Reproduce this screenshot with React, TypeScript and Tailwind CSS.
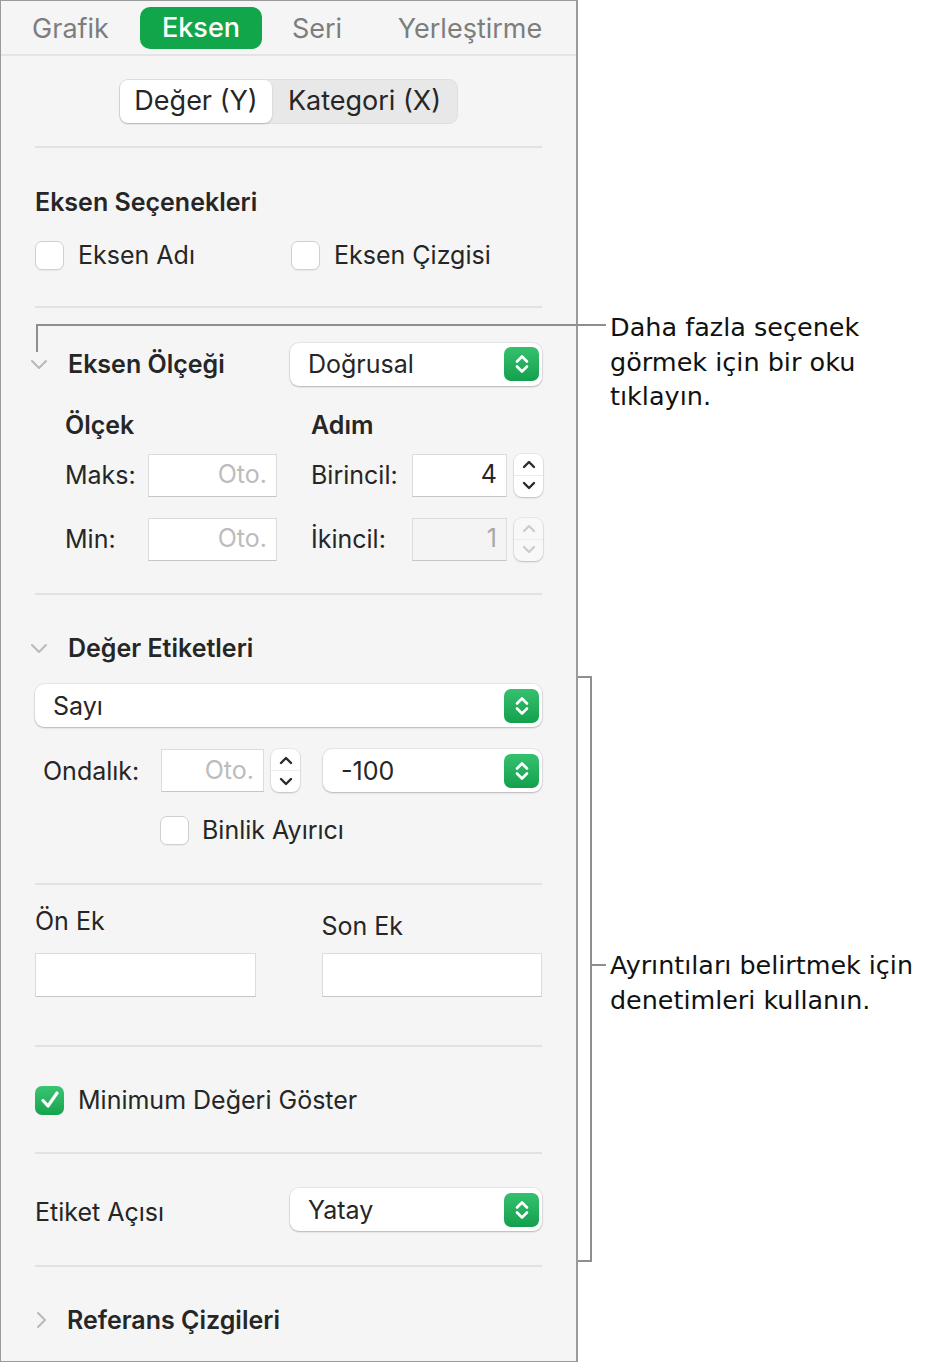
import React from 'react'

const TEXT = 'text-[25px] text-[#262626] leading-[32px]'

function Divider() {
  return <div className="mx-[34px] h-[2px] shrink-0 bg-[#e2e2e2]" />
}

function ChevronDown() {
  return (
    <svg width="18" height="12" viewBox="0 0 18 12" fill="none" stroke="#b9b9b9" strokeWidth="2" strokeLinecap="round" strokeLinejoin="round">
      <path d="M2 3l7 7 7-7" />
    </svg>
  )
}

function ChevronRight() {
  return (
    <svg width="12" height="18" viewBox="0 0 12 18" fill="none" stroke="#b9b9b9" strokeWidth="2" strokeLinecap="round" strokeLinejoin="round">
      <path d="M3 2l7 7-7 7" />
    </svg>
  )
}

function GreenUpDown() {
  return (
    <div className="w-[35px] h-[34px] shrink-0 rounded-[7px] bg-linear-to-b from-[#34c16e] to-[#12a04e] flex items-center justify-center">
      <svg width="16" height="24" viewBox="0 0 16 24" fill="none" stroke="white" strokeWidth="2.6" strokeLinecap="round" strokeLinejoin="round">
        <path d="M3 9.5l5-5 5 5" />
        <path d="M3 14.5l5 5 5-5" />
      </svg>
    </div>
  )
}

function Popup({ label, className = '' }: { label: string; className?: string }) {
  return (
    <div className={`h-[43px] shrink-0 bg-white rounded-[9px] shadow-[0_0_0_1px_rgba(0,0,0,0.05),0_1px_2px_rgba(0,0,0,0.22)] flex items-center pl-[18px] pr-[3px] ${className}`}>
      <span className={`flex-1 ${TEXT}`}>{label}</span>
      <GreenUpDown />
    </div>
  )
}

function Stepper({ disabled = false }: { disabled?: boolean }) {
  const stroke = disabled ? '#cdcdcd' : '#2a2a2a'
  return (
    <div className={`w-[29px] h-[43px] shrink-0 rounded-[8px] flex flex-col shadow-[0_0_0_1px_rgba(0,0,0,0.05),0_1px_2px_rgba(0,0,0,0.18)] ${disabled ? 'bg-[#f8f8f8]' : 'bg-white'}`}>
      <div className="flex-1 flex items-center justify-center border-b border-[#ececec]">
        <svg width="16" height="10" viewBox="0 0 16 10" fill="none" stroke={stroke} strokeWidth="2.4" strokeLinecap="round" strokeLinejoin="round">
          <path d="M3 8l5-5 5 5" />
        </svg>
      </div>
      <div className="flex-1 flex items-center justify-center">
        <svg width="16" height="10" viewBox="0 0 16 10" fill="none" stroke={stroke} strokeWidth="2.4" strokeLinecap="round" strokeLinejoin="round">
          <path d="M3 2l5 5 5-5" />
        </svg>
      </div>
    </div>
  )
}

function Field({ value = '', placeholder = false, disabled = false, className = '' }: { value?: string; placeholder?: boolean; disabled?: boolean; className?: string }) {
  return (
    <div
      className={`h-[43px] shrink-0 border border-[#dcdcdc] border-b-[#c6c6c6] flex items-center justify-end pr-[9px] text-[25px] ${
        disabled ? 'bg-[#f4f4f4] text-[#a8a8a8]' : 'bg-white'
      } ${placeholder ? 'text-[#bcbcbc]' : disabled ? '' : 'text-[#262626]'} ${className}`}
    >
      {value}
    </div>
  )
}

function Checkbox({ checked = false }: { checked?: boolean }) {
  if (checked) {
    return (
      <div className="w-[29px] h-[29px] shrink-0 rounded-[7px] bg-linear-to-b from-[#38c571] to-[#15a34f] flex items-center justify-center">
        <svg width="20" height="18" viewBox="0 0 20 18" fill="none" stroke="white" strokeWidth="3.2" strokeLinecap="round" strokeLinejoin="round">
          <path d="M3 9.5l5 5.5 9-13" />
        </svg>
      </div>
    )
  }
  return <div className="w-[29px] h-[29px] shrink-0 rounded-[7px] bg-white border border-[#d0d0d0] shadow-[0_1px_1px_rgba(0,0,0,0.05)]" />
}

export default function App() {
  return (
    <div className="relative w-[926px] h-[1362px] bg-white flex [font-family:Inter,'Liberation_Sans',sans-serif]">
      {/* Inspector panel */}
      <div className="w-[578px] h-[1362px] shrink-0 bg-[#f5f5f5] border border-[#9a9a9a] border-r-2 flex flex-col">
        {/* Tabs */}
        <div className="h-[55px] shrink-0 flex items-center border-b-2 border-[#e4e4e4]">
          <div className="w-[139px] pt-[3px] text-center text-[27px] text-[#7d7d7d]">Grafik</div>
          <div className="w-[122px] h-[42px] pt-[1px] rounded-[10px] bg-[#12a64b] flex items-center justify-center text-[27px] text-white font-medium">Eksen</div>
          <div className="w-[110px] pt-[3px] text-center text-[27px] text-[#7d7d7d]">Seri</div>
          <div className="w-[196px] pt-[3px] text-center text-[27px] text-[#7d7d7d]">Yerleştirme</div>
        </div>

        {/* Segmented control */}
        <div className="h-[90px] shrink-0 flex items-center justify-center">
          <div className="h-[45px] rounded-[9px] bg-[#e8e8e8] flex p-[1px] shadow-[inset_0_0_0_1px_rgba(0,0,0,0.04)]">
            <div className="w-[152px] rounded-[8px] bg-white shadow-[0_1px_2px_rgba(0,0,0,0.2)] flex items-center justify-center text-[27px] text-[#262626]">Değer (Y)</div>
            <div className="w-[185px] flex items-center justify-center text-[27px] text-[#262626]">Kategori (X)</div>
          </div>
        </div>

        <Divider />

        {/* Eksen Seçenekleri */}
        <div className="px-[34px] pt-[38px] pb-[35px] shrink-0">
          <div className={`h-[32px] font-semibold ${TEXT}`}>Eksen Seçenekleri</div>
          <div className="mt-[21px] h-[32px] flex items-center">
            <div className="w-[256px] shrink-0 flex items-center gap-[14px]">
              <Checkbox />
              <span className={TEXT}>Eksen Adı</span>
            </div>
            <div className="flex items-center gap-[14px]">
              <Checkbox />
              <span className={TEXT}>Eksen Çizgisi</span>
            </div>
          </div>
        </div>

        <Divider />

        {/* Eksen Ölçeği */}
        <div className="px-[34px] pt-[34px] pb-[32px] shrink-0">
          <div className="h-[44px] flex items-center">
            <div className="w-[32px] -ml-[12px] shrink-0 flex items-center justify-center">
              <ChevronDown />
            </div>
            <span className={`ml-[13px] font-semibold ${TEXT}`}>Eksen Ölçeği</span>
            <Popup label="Doğrusal" className="ml-auto w-[252px]" />
          </div>
          <div className="mt-[23px] h-[32px] flex items-center pl-[30px]">
            <span className={`w-[246px] shrink-0 font-semibold ${TEXT}`}>Ölçek</span>
            <span className={`font-semibold ${TEXT}`}>Adım</span>
          </div>
          <div className="mt-[12px] h-[44px] flex items-center pl-[30px]">
            <span className={`w-[83px] shrink-0 ${TEXT}`}>Maks:</span>
            <Field value="Oto." placeholder className="w-[129px]" />
            <span className={`ml-[34px] w-[101px] shrink-0 ${TEXT}`}>Birincil:</span>
            <Field value="4" className="w-[95px]" />
            <div className="ml-[7px] shrink-0">
              <Stepper />
            </div>
          </div>
          <div className="mt-[20px] h-[44px] flex items-center pl-[30px]">
            <span className={`w-[83px] shrink-0 ${TEXT}`}>Min:</span>
            <Field value="Oto." placeholder className="w-[129px]" />
            <span className={`ml-[34px] w-[101px] shrink-0 ${TEXT}`}>İkincil:</span>
            <Field value="1" disabled className="w-[95px]" />
            <div className="ml-[7px] shrink-0">
              <Stepper disabled />
            </div>
          </div>
        </div>

        <Divider />

        {/* Değer Etiketleri */}
        <div className="px-[34px] pt-[37px] pb-[37px] shrink-0">
          <div className="h-[32px] flex items-center">
            <div className="w-[32px] -ml-[12px] shrink-0 flex items-center justify-center">
              <ChevronDown />
            </div>
            <span className={`ml-[13px] font-semibold ${TEXT}`}>Değer Etiketleri</span>
          </div>
          <Popup label="Sayı" className="mt-[20px] h-[42px] w-full" />
          <div className="mt-[22px] h-[43px] flex items-center pl-[8px]">
            <span className={`w-[118px] shrink-0 ${TEXT}`}>Ondalık:</span>
            <Field value="Oto." placeholder className="w-[103px] h-[41px]" />
            <div className="ml-[7px] shrink-0">
              <Stepper />
            </div>
            <Popup label="-100" className="ml-[23px] flex-1 shrink" />
          </div>
          <div className="mt-[22px] h-[32px] flex items-center pl-[125px] gap-[13px]">
            <Checkbox />
            <span className={TEXT}>Binlik Ayırıcı</span>
          </div>
        </div>

        <Divider />

        {/* Ön Ek / Son Ek */}
        <div className="px-[34px] pt-[20px] pb-[48px] shrink-0 grid grid-cols-2 gap-x-[66px]">
          <div>
            <div className={`h-[32px] ${TEXT}`}>Ön Ek</div>
            <Field className="mt-[16px] h-[44px] w-full" />
          </div>
          <div>
            <div className={`h-[32px] pt-[5px] ${TEXT}`}>Son Ek</div>
            <Field className="mt-[16px] h-[44px] w-full" />
          </div>
        </div>

        <Divider />

        {/* Minimum */}
        <div className="px-[34px] pt-[37px] pb-[36px] shrink-0">
          <div className="h-[32px] flex items-center gap-[14px]">
            <Checkbox checked />
            <span className={TEXT}>Minimum Değeri Göster</span>
          </div>
        </div>

        <Divider />

        {/* Etiket Açısı */}
        <div className="px-[34px] pt-[34px] pb-[34px] shrink-0">
          <div className="h-[43px] flex items-center">
            <span className={`pt-[4px] ${TEXT}`}>Etiket Açısı</span>
            <Popup label="Yatay" className="ml-auto w-[252px]" />
          </div>
        </div>

        <Divider />

        {/* Referans Çizgileri */}
        <div className="px-[34px] pt-[37px] shrink-0">
          <div className="h-[32px] flex items-center">
            <div className="w-[14px] shrink-0 flex items-center">
              <ChevronRight />
            </div>
            <span className={`ml-[18px] font-semibold ${TEXT}`}>Referans Çizgileri</span>
          </div>
        </div>
      </div>

      {/* Callout: arrow hint */}
      <div className="absolute left-[36px] top-[324px] w-[570px] h-[2px] bg-[#8e8e8e]" />
      <div className="absolute left-[36px] top-[324px] w-[2px] h-[28px] bg-[#8e8e8e]" />
      <div className="absolute left-[610px] top-[310px] text-[25.5px] leading-[34.5px] text-[#111] [font-family:'DejaVu_Sans',sans-serif]">
        <p>Daha fazla seçenek</p>
        <p>görmek için bir oku</p>
        <p>tıklayın.</p>
      </div>

      {/* Callout: bracket */}
      <div className="absolute left-[578px] top-[676px] w-[14px] h-[2px] bg-[#8e8e8e]" />
      <div className="absolute left-[590px] top-[676px] w-[2px] h-[586px] bg-[#8e8e8e]" />
      <div className="absolute left-[578px] top-[1260px] w-[14px] h-[2px] bg-[#8e8e8e]" />
      <div className="absolute left-[590px] top-[964px] w-[16px] h-[2px] bg-[#8e8e8e]" />
      <div className="absolute left-[610px] top-[948px] text-[25.4px] leading-[34.5px] text-[#111] [font-family:'DejaVu_Sans',sans-serif]">
        <p>Ayrıntıları belirtmek için</p>
        <p>denetimleri kullanın.</p>
      </div>
    </div>
  )
}
